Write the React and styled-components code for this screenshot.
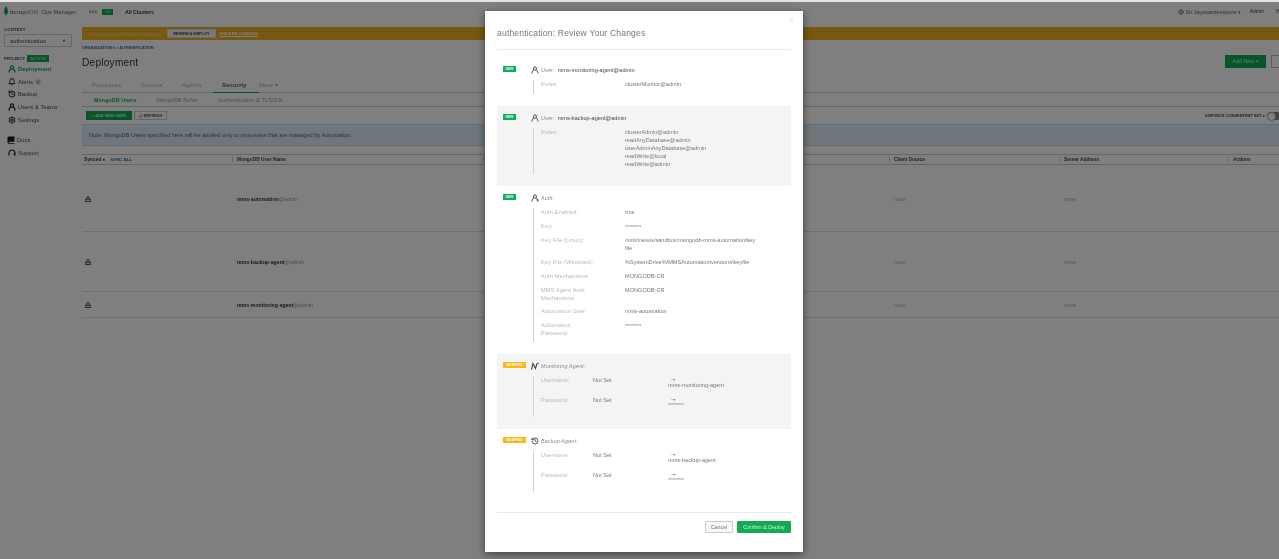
import React from 'react';
import styled, { createGlobalStyle } from 'styled-components';
import { Bell, Globe, History, Settings, RefreshCw } from 'lucide-react';

const Global = createGlobalStyle`
  html, body {
    margin: 0;
    padding: 0;
    width: 100%;
    height: 100%;
    overflow: hidden;
    background: #fff;
    font-family: "Liberation Sans", Arial, sans-serif;
    color: #333;
  }
  #root { height: 100%; filter: blur(0.4px); }
`;

const Page = styled.div`
  position: relative;
  width: 1279px;
  height: 559px;
  overflow: hidden;
  background: #fff;
  display: flex;
  flex-direction: column;
`;

const TopStrip = styled.div`
  height: 2px;
  background: #e4e4e4;
  flex: none;
`;

const Header = styled.header`
  height: 19px;
  flex: none;
  display: flex;
  align-items: center;
  font-size: 6px;
  white-space: nowrap;
`;

const Logo = styled.div`
  width: 82px;
  flex: none;
  padding-left: 4px;
  box-sizing: border-box;
  display: flex;
  align-items: center;
  color: #555;
`;

const LogoWord = styled.span`
  margin-left: 2px;
  font-family: "Liberation Serif", serif;
  letter-spacing: 0.1px;
  font-size: 6.6px;
  span { color: #999; }
`;

const LogoProduct = styled.span`
  margin-left: 3px;
  font-size: 5.8px;
  color: #666;
`;

const Version = styled.span`
  margin-left: 7px;
  color: #13aa52;
  font-size: 3.6px;
  font-weight: bold;
`;

const OkBadge = styled.span`
  margin-left: 5px;
  width: 11px;
  text-align: center;
  height: 6px;
  line-height: 6px;
  font-size: 3.6px;
  background: #13aa52;
  color: #8fe;
`;

const Clusters = styled.span`
  margin-left: 12px;
  font-weight: bold;
  font-size: 5.2px;
  color: #333;
`;

const HeaderRight = styled.div`
  margin-left: auto;
  display: flex;
  align-items: center;
  color: #333;
  font-size: 4.9px;
`;

const Zone = styled.span`
  display: inline-flex;
  align-items: center;
  gap: 1px;
  font-size: 5.4px;
  color: #666;
  margin-right: 9px;
`;

const HeaderLink = styled.span`
  margin-right: ${p => p.$gap}px;
`;

const Body = styled.div`
  flex: 1;
  display: flex;
  min-height: 0;
`;

const Sidebar = styled.aside`
  width: 82px;
  flex: none;
  box-sizing: border-box;
  padding: 4px 0 0 4px;
`;

const SideLabel = styled.div`
  font-size: 4.2px;
  font-weight: bold;
  letter-spacing: 0.2px;
  color: #444;
  display: flex;
  align-items: center;
  gap: 2px;
  height: 8px;
`;

const ContextBox = styled.div`
  width: 68px;
  height: 13px;
  box-sizing: border-box;
  border: 1px solid #ccc;
  border-radius: 1px;
  display: flex;
  align-items: center;
  justify-content: space-between;
  padding: 0 5px;
  margin: 1px 0 7px;
  font-size: 5.8px;
  color: #444;
  i { font-style: normal; font-size: 4px; }
`;

const ActiveBadge = styled.span`
  background: #13aa52;
  color: #7ec;
  font-size: 4px;
  padding: 0 3px;
  height: 7px;
  line-height: 7px;
`;

const Nav = styled.nav`
  margin-top: 1px;
`;

const NavItem = styled.div`
  display: flex;
  align-items: center;
  gap: 2px;
  height: 12.6px;
  margin-left: ${p => (p.$plain ? '3px' : '4px')};
  margin-top: ${p => (p.$gap ? '8px' : '0')};
  font-size: 5.6px;
  color: ${p => (p.$active ? '#13aa52' : '#444')};
  font-weight: ${p => (p.$active ? 'bold' : 'normal')};
  letter-spacing: 0.15px;
  svg { color: ${p => (p.$active ? '#13aa52' : '#1c1c1c')}; flex: none; }
`;

const Count = styled.span`
  width: 6px;
  height: 6px;
  border-radius: 50%;
  background: #bbb;
  border: 1px solid #ddd;
  box-sizing: border-box;
`;

const Main = styled.main`
  flex: 1;
  min-width: 0;
  padding-top: 6px;
`;

const Banner = styled.div`
  height: 13px;
  background: #f0b020;
  display: flex;
  align-items: center;
  padding-left: 6px;
  font-size: 5.25px;
  color: #fbd98a;
`;

const ReviewButton = styled.span`
  margin-left: 5px;
  height: 9px;
  line-height: 8px;
  padding: 0 5px;
  box-sizing: border-box;
  border: 1px solid #ddd;
  background: #f4f4f4;
  color: #333;
  font-size: 3.9px;
  font-weight: bold;
`;

const Discard = styled.span`
  margin-left: 4px;
  font-size: 3.9px;
  font-weight: bold;
  color: #fff;
  border-bottom: 1px solid #fff;
`;

const Crumb = styled.div`
  margin-top: 5px;
  font-size: 3.9px;
  font-weight: bold;
  color: #2a6d9e;
  height: 6px;
  line-height: 6px;
`;

const TitleRow = styled.div`
  display: flex;
  align-items: center;
  height: 13px;
  margin-top: 4px;
`;

const PageTitle = styled.h1`
  margin: 1px 0 0;
  font-size: 10.2px;
  font-weight: normal;
  letter-spacing: 0.2px;
  color: #333;
`;

const AddNew = styled.span`
  margin-left: auto;
  width: 41px;
  height: 13px;
  line-height: 13px;
  text-align: center;
  background: #13aa52;
  color: #9fd;
  font-size: 5.4px;
`;

const Ghost = styled.span`
  margin: 0 -8px 0 5px;
  width: 16px;
  height: 13px;
  box-sizing: border-box;
  border: 1px solid #bbb;
`;

const Tabs = styled.div`
  margin-top: 11px;
  height: 14px;
  display: flex;
  box-sizing: border-box;
  border-bottom: 1px solid #ccc;
  padding-left: 10px;
  font-size: 5.9px;
  letter-spacing: 0.2px;
`;

const Tab = styled.span`
  display: block;
  width: ${p => p.$w}px;
  line-height: 12px;
  height: 14px;
  box-sizing: border-box;
  color: ${p => (p.$on ? '#555' : '#aaa')};
  font-weight: ${p => (p.$on ? 'bold' : 'normal')};
  ${p => p.$on && 'border-bottom: 1px solid #13aa52; margin-left: -9px; padding-left: 9px;'}
`;

const SubTabs = styled.div`
  height: 14px;
  display: flex;
  box-sizing: border-box;
  border-bottom: 1px solid #ccc;
  padding: 0 0 0 12px;
  gap: 20px;
  font-size: 5.3px;
  line-height: 15px;
  color: #999;
`;

const SubTab = styled.span`
  color: ${p => (p.$on ? '#13aa52' : '#999')};
  font-weight: ${p => (p.$on ? 'bold' : 'normal')};
  letter-spacing: ${p => (p.$on ? '0.1px' : '0.22px')};
`;

const Actions = styled.div`
  height: 17px;
  display: flex;
  align-items: center;
  padding-left: 4px;
  gap: 2px;
`;

const ActionButton = styled.span`
  display: inline-flex;
  align-items: center;
  gap: 1px;
  height: 9px;
  padding: 0 ${p => (p.$green ? '5px' : '4px')};
  box-sizing: border-box;
  font-size: 3.9px;
  font-weight: bold;
  background: ${p => (p.$green ? '#13aa52' : '#fff')};
  color: ${p => (p.$green ? '#bfe' : '#555')};
  border: 1px solid ${p => (p.$green ? '#13aa52' : '#ccc')};
`;

const Enforce = styled.div`
  margin-left: auto;
  margin-right: -6px;
  display: flex;
  align-items: center;
  gap: 2px;
  font-size: 3.95px;
  font-weight: bold;
  color: #444;
`;

const Toggle = styled.span`
  width: 18px;
  height: 8px;
  border-radius: 4px;
  background: #888;
  position: relative;
  &::before {
    content: '';
    position: absolute;
    left: 0;
    top: 0;
    width: 7px;
    height: 7px;
    border-radius: 50%;
    background: #fff;
    border: 0.5px solid #aaa;
  }
`;

const Note = styled.div`
  height: 22px;
  line-height: 21px;
  box-sizing: border-box;
  background: #dfeef8;
  border: 1px solid #bcdcf0;
  border-width: 1px 0;
  padding-left: 7px;
  font-size: 5.6px;
  letter-spacing: 0.05px;
  color: #2a6d9e;
`;

const Table = styled.div`
  margin-top: 8px;
  display: grid;
  grid-template-columns: 150px 252px 405px 170px 169px 51px;
`;

const Head = styled.div`
  height: 11px;
  box-sizing: border-box;
  border-top: 1px solid #ccc;
  border-bottom: 1px solid #ccc;
  display: flex;
  align-items: center;
  gap: 3px;
  padding-left: ${p => (p.$first ? '2px' : '5px')};
  font-size: 4.8px;
  font-weight: bold;
  color: #444;
  position: relative;
  ${p => !p.$first && `
    &::before {
      content: '';
      position: absolute;
      left: 0;
      top: 2px;
      bottom: 2px;
      width: 1px;
      background: #ccc;
    }
  `}
`;

const SyncAll = styled.span`
  color: #2a6d9e;
  margin-left: 2px;
  font-size: 4.4px;
`;

const Cell = styled.div`
  height: ${p => p.$h}px;
  box-sizing: border-box;
  border-bottom: 1px solid #ddd;
  display: flex;
  align-items: center;
  padding-left: ${p => (p.$first ? '3px' : '5px')};
  padding-top: 1px;
  font-size: 5.2px;
  color: #aaa;
`;

const UserName = styled.span`
  color: #333;
  font-weight: bold;
  span { color: #999; font-weight: normal; }
`;

const Overlay = styled.div`
  position: absolute;
  inset: 2px 0 0 0;
  background: rgba(0, 0, 0, 0.5);
`;

const Modal = styled.div`
  position: absolute;
  left: 485px;
  top: 11px;
  width: 318px;
  height: 541px;
  box-sizing: border-box;
  background: #fff;
  padding: 0 12px;
  box-shadow: 0 2px 8px rgba(0, 0, 0, 0.5);
  display: flex;
  flex-direction: column;
`;

const Close = styled.span`
  position: absolute;
  right: 9px;
  top: 4px;
  font-size: 9px;
  color: #e2e2e2;
`;

const ModalTitle = styled.h2`
  margin: 0;
  height: 39px;
  line-height: 44px;
  box-sizing: border-box;
  border-bottom: 1px solid #e8e8e8;
  font-size: 8.6px;
  font-weight: normal;
  letter-spacing: 0.16px;
  color: #777;
  flex: none;
`;

const Section = styled.section`
  padding: 8px 0 12px 6px;
  background: ${p => (p.$shade ? '#f3f5f4' : '#fff')};
  margin-top: ${p => p.$top || 0}px;
`;

const SectionHead = styled.div`
  display: flex;
  align-items: center;
  height: 8px;
  font-size: 5.4px;
`;

const Badge = styled.span`
  width: ${p => (p.$mod ? '23px' : '13px')};
  margin-right: ${p => (p.$mod ? '5px' : '15px')};
  height: 6px;
  margin-top: -1.5px;
  flex: none;
  line-height: 6px;
  text-align: center;
  font-size: 3.4px;
  font-weight: bold;
  color: #dff;
  background: ${p => (p.$mod ? '#fdb714' : '#13aa52')};
`;

const HeadIcon = styled.span`
  width: 10px;
  flex: none;
  display: flex;
  align-items: center;
  color: #444;
`;

const HeadLabel = styled.em`
  color: #888;
  margin-right: 3px;
  letter-spacing: 0.15px;
`;

const HeadValue = styled.span`
  color: #444;
  font-size: 5.6px;
`;

const Details = styled.div`
  margin: 6px 0 0 30px;
  border-left: 1px solid #d2d2d2;
  padding: 0 0 ${p => p.$pad || 0}px 7px;
`;

const Row = styled.div`
  display: flex;
  line-height: 8px;
  font-size: 5.6px;
  padding-bottom: ${p => (p.$tall ? '5px' : '6px')};
  min-height: ${p => (p.$change ? '14px' : '0')};
`;

const Label = styled.div`
  width: ${p => (p.$short ? '52px' : '84px')};
  flex: none;
  box-sizing: border-box;
  padding-right: ${p => (p.$short ? '0' : '26px')};
  font-size: 5.6px;
  color: #b8b8b8;
  letter-spacing: 0.15px;
`;

const Value = styled.div`
  width: 134px;
  color: #777;
`;

const OldValue = styled.div`
  width: 75px;
  flex: none;
  color: #777;
`;

const NewValue = styled.div`
  color: #777;
  line-height: 6px;
  b { display: block; padding-left: 2px; height: 6px; line-height: 6px; color: #333; font-size: 7px; }
`;

const Stars = styled.span`
  font-size: 5.2px;
  color: #888;
  line-height: 6px;
  display: block;
  margin-top: ${p => p.$drop || 0}px;
`;

const Footer = styled.footer`
  margin-top: 8px;
  border-top: 1px solid #e8e8e8;
  padding-top: 8px;
  display: flex;
  justify-content: flex-end;
  gap: 4px;
`;

const FootButton = styled.span`
  height: 12px;
  line-height: 10px;
  box-sizing: border-box;
  text-align: center;
  width: ${p => (p.$green ? '54px' : '28px')};
  font-size: 5.3px;
  border: 1px solid ${p => (p.$green ? '#13aa52' : '#ccc')};
  background: ${p => (p.$green ? '#13aa52' : '#f7f7f7')};
  color: ${p => (p.$green ? '#c4f2d6' : '#777')};
  border-radius: 1px;
`;

// little person glyph, the one used for users and auth
const Person = ({ size = 8, weight = 2, plus }) => (
  <svg width={size} height={size} viewBox="0 0 16 16" fill="none" stroke="currentColor" strokeWidth={weight}>
    <circle cx="8" cy="5" r="3.2" />
    <path d="M2 15c0-4 2-6.5 4-6.5M14 15c0-4-2-6.5-4-6.5" />
    {plus && <path d="M11 12h4" />}
  </svg>
);

const Leaf = () => (
  <svg width="4" height="11" viewBox="0 0 8 22">
    <path d="M4 0C7 4 8 8 8 11c0 4-2 6-3.4 7L4 22l-.6-4C2 17 0 15 0 11 0 8 1 4 4 0z" fill="#13aa52" />
  </svg>
);

const Book = () => (
  <svg width="8" height="8" viewBox="0 0 16 16" fill="currentColor">
    <path d="M4 1h11v10.5H5c-1 0-1.6.5-1.6 1.2S4 14 5 14h10v1.5H4.5C2.500 15.500 1 14.300 1 12.500V4c0-1.700 1.300-3 3-3z" />
  </svg>
);

const Headset = () => (
  <svg width="8" height="8" viewBox="0 0 16 16" fill="none" stroke="currentColor" strokeWidth="2.4">
    <path d="M2 13V8a6 6 0 0 1 12 0" />
    <rect x="11.500" y="8" width="3.500" height="5" fill="currentColor" stroke="none" />
  </svg>
);

const Padlock = () => (
  <svg width="6" height="6" viewBox="0 0 12 12" fill="none" stroke="#222" strokeWidth="1.6">
    <path d="M3.500 6V3.500a2.500 2.500 0 0 1 5 0V6" />
    <path d="M1 6.500h10M1 11h10M1.500 6.500V11M10.500 6.500V11" />
  </svg>
);

const Pulse = () => (
  <svg width="8" height="8" viewBox="0 0 16 16" fill="none" stroke="currentColor" strokeWidth="2.2">
    <path d="M1 15 4 3l5 10 3-10" />
    <circle cx="14" cy="3" r="1.500" fill="currentColor" stroke="none" />
  </svg>
);

const users = [
  { name: 'mms-automation', h: 67 },
  { name: 'mms-backup-agent', h: 60 },
  { name: 'mms-monitoring-agent', h: 26 },
];

const columns = ['MongoDB User Name', '', 'Client Source', 'Server Address', 'Actions'];

const stars = '********';

export default function App() {
  return (
    <Page>
      <Global />
      <TopStrip />
      <Header>
        <Logo>
          <Leaf />
          <LogoWord>mongo<span>DB</span></LogoWord>
          <LogoProduct>Ops Manager</LogoProduct>
        </Logo>
        <Version>4.0.6</Version>
        <OkBadge>OK</OkBadge>
        <Clusters>All Clusters</Clusters>
        <HeaderRight>
          <Zone><Globe size={6} />Sri Jayawardenepura ▾</Zone>
          <HeaderLink $gap={12}>Admin</HeaderLink>
          <span>V</span>
        </HeaderRight>
      </Header>
      <Body>
        <Sidebar>
          <SideLabel>CONTEXT</SideLabel>
          <ContextBox>authentication<i>▼</i></ContextBox>
          <SideLabel>PROJECT <ActiveBadge>ACTIVE</ActiveBadge></SideLabel>
          <Nav>
            <NavItem $active><Person weight={2.6} />Deployment</NavItem>
            <NavItem><Bell size={8} strokeWidth={3} />Alerts <Count /></NavItem>
            <NavItem><History size={8} strokeWidth={2.8} />Backup</NavItem>
            <NavItem><Person weight={2.4} />Users &amp; Teams</NavItem>
            <NavItem><Settings size={8} strokeWidth={3} />Settings</NavItem>
            <NavItem $gap $plain><Book />Docs</NavItem>
            <NavItem><Headset />Support</NavItem>
          </Nav>
        </Sidebar>
        <Main>
          <Banner>
            You have unpublished changes.
            <ReviewButton>REVIEW &amp; DEPLOY</ReviewButton>
            <Discard>DISCARD CHANGES</Discard>
          </Banner>
          <Crumb>ORGANIZATION 0 &gt; AUTHENTICATION</Crumb>
          <TitleRow>
            <PageTitle>Deployment</PageTitle>
            <AddNew>Add New ▾</AddNew>
            <Ghost />
          </TitleRow>
          <Tabs>
            <Tab $w={49}>Processes</Tab>
            <Tab $w={41}>Servers</Tab>
            <Tab $w={40}>Agents</Tab>
            <Tab $on $w={46}>Security</Tab>
            <Tab $w={40}>More ▾</Tab>
          </Tabs>
          <SubTabs>
            <SubTab $on>MongoDB Users</SubTab>
            <SubTab>MongoDB Roles</SubTab>
            <SubTab>Authentication &amp; TLS/SSL</SubTab>
          </SubTabs>
          <Actions>
            <ActionButton $green>+ ADD NEW USER</ActionButton>
            <ActionButton><RefreshCw size={4} />REFRESH</ActionButton>
            <Enforce>ENFORCE CONSENTENT SET ● <Toggle /></Enforce>
          </Actions>
          <Note>Note: MongoDB Users specified here will be applied only to processes that are managed by Automation.</Note>
          <Table>
            <Head $first>Synced ● <SyncAll>SYNC ALL</SyncAll></Head>
            {columns.map((c, i) => <Head key={i}>{c}</Head>)}
            {users.map(u => (
              <React.Fragment key={u.name}>
                <Cell $first $h={u.h}><Padlock /></Cell>
                <Cell $h={u.h}><UserName>{u.name}<span>@admin</span></UserName></Cell>
                <Cell $h={u.h} />
                <Cell $h={u.h}>none</Cell>
                <Cell $h={u.h}>none</Cell>
                <Cell $h={u.h} />
              </React.Fragment>
            ))}
          </Table>
        </Main>
      </Body>
      <Overlay />
      <Modal>
        <Close>×</Close>
        <ModalTitle>authentication: Review Your Changes</ModalTitle>
        <Section $top={8}>
          <SectionHead>
            <Badge>NEW</Badge>
            <HeadIcon><Person /></HeadIcon>
            <HeadLabel>User:</HeadLabel>
            <HeadValue>mms-monitoring-agent@admin</HeadValue>
          </SectionHead>
          <Details>
            <Row><Label>Roles:</Label><Value>clusterMonitor@admin</Value></Row>
          </Details>
        </Section>
        <Section $shade>
          <SectionHead>
            <Badge>NEW</Badge>
            <HeadIcon><Person /></HeadIcon>
            <HeadLabel>User:</HeadLabel>
            <HeadValue>mms-backup-agent@admin</HeadValue>
          </SectionHead>
          <Details>
            <Row>
              <Label>Roles:</Label>
              <Value>
                clusterAdmin@admin<br />
                readAnyDatabase@admin<br />
                userAdminAnyDatabase@admin<br />
                readWrite@local<br />
                readWrite@admin
              </Value>
            </Row>
          </Details>
        </Section>
        <Section>
          <SectionHead>
            <Badge>NEW</Badge>
            <HeadIcon><Person plus /></HeadIcon>
            <HeadLabel>Auth:</HeadLabel>
          </SectionHead>
          <Details>
            <Row><Label>Auth Enabled:</Label><Value>true</Value></Row>
            <Row><Label>Key:</Label><Value><Stars $drop={1.5}>{stars}</Stars></Value></Row>
            <Row><Label>Key File (Linux):</Label><Value>/mnt/mesos/sandbox/mongodb-mms-automation/key file</Value></Row>
            <Row><Label>Key File (Windows):</Label><Value>%SystemDrive%\MMSAutomation\versions\keyfile</Value></Row>
            <Row><Label>Auth Mechanisms:</Label><Value>MONGODB-CR</Value></Row>
            <Row $tall><Label>MMS Agent Auth Mechanisms:</Label><Value>MONGODB-CR</Value></Row>
            <Row><Label>Automation User:</Label><Value>mms-automation</Value></Row>
            <Row $tall><Label>Automation Password:</Label><Value><Stars $drop={1.5}>{stars}</Stars></Value></Row>
          </Details>
        </Section>
        <Section $shade>
          <SectionHead>
            <Badge $mod>MODIFIED</Badge>
            <HeadIcon><Pulse /></HeadIcon>
            <HeadLabel>Monitoring Agent:</HeadLabel>
          </SectionHead>
          <Details $pad={1}>
            <Row $change>
              <Label $short>Username:</Label>
              <OldValue>Not Set</OldValue>
              <NewValue><b>→</b>mms-monitoring-agent</NewValue>
            </Row>
            <Row $change>
              <Label $short>Password:</Label>
              <OldValue>Not Set</OldValue>
              <NewValue><b>→</b><Stars>{stars}</Stars></NewValue>
            </Row>
          </Details>
        </Section>
        <Section>
          <SectionHead>
            <Badge $mod>MODIFIED</Badge>
            <HeadIcon><History size={8} strokeWidth={2.6} /></HeadIcon>
            <HeadLabel>Backup Agent:</HeadLabel>
          </SectionHead>
          <Details $pad={1}>
            <Row $change>
              <Label $short>Username:</Label>
              <OldValue>Not Set</OldValue>
              <NewValue><b>→</b>mms-backup-agent</NewValue>
            </Row>
            <Row $change>
              <Label $short>Password:</Label>
              <OldValue>Not Set</OldValue>
              <NewValue><b>→</b><Stars>{stars}</Stars></NewValue>
            </Row>
          </Details>
        </Section>
        <Footer>
          <FootButton>Cancel</FootButton>
          <FootButton $green>Confirm &amp; Deploy</FootButton>
        </Footer>
      </Modal>
    </Page>
  );
}
